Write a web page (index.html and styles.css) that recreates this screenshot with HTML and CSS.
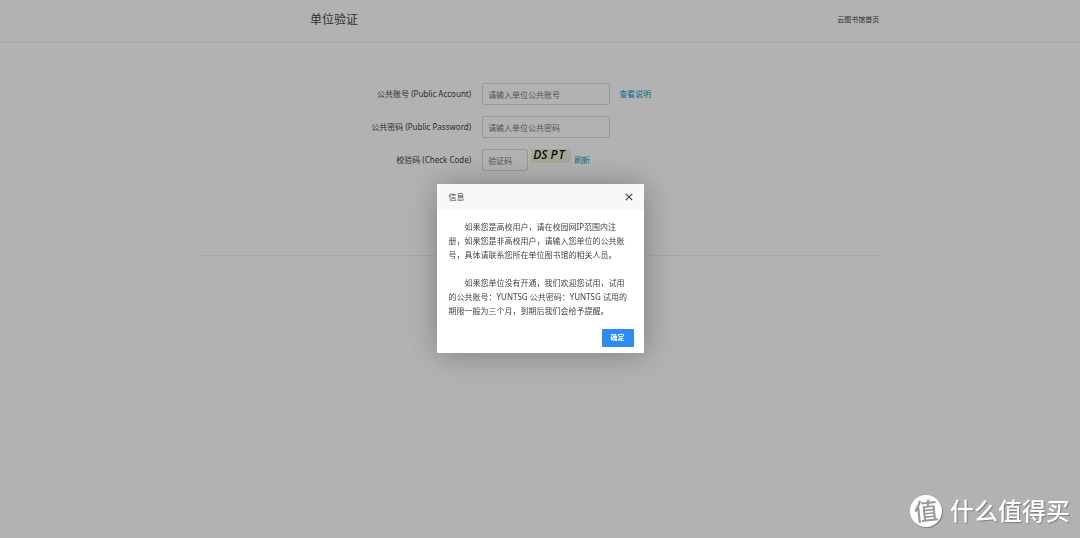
FILE: index.html
```html
<!DOCTYPE html>
<html lang="zh-CN">
<head>
<meta charset="utf-8">
<title>单位验证</title>
<link rel="stylesheet" href="styles.css">
</head>
<body>
<header class="header">
  <div class="container header-inner">
    <h1 class="title">单位验证</h1>
    <a class="home" href="#">云图书馆首页</a>
  </div>
</header>
<main class="container main">
  <form class="form">
    <div class="row">
      <label class="label" for="account">公共账号 (Public Account)</label>
      <div class="field">
        <input class="input" id="account" type="text" placeholder="请输入单位公共账号">
        <a class="link link-help" href="#">查看说明</a>
      </div>
    </div>
    <div class="row">
      <label class="label" for="password">公共密码 (Public Password)</label>
      <div class="field">
        <input class="input" id="password" type="password" placeholder="请输入单位公共密码">
      </div>
    </div>
    <div class="row">
      <label class="label" for="code">校验码 (Check Code)</label>
      <div class="field">
        <input class="input input-code" id="code" type="text" placeholder="验证码">
        <span class="captcha"><span>D</span><span>S</span><span class="captcha-gap">P</span><span class="captcha-tail">T</span></span>
        <a class="link link-refresh" href="#">刷新</a>
      </div>
    </div>
  </form>
</main>
<div class="overlay">
  <section class="dialog" role="dialog" aria-labelledby="dialog-title">
    <div class="dialog-head">
      <h2 class="dialog-title" id="dialog-title">信息</h2>
      <button class="close" type="button" aria-label="关闭">
        <svg width="8" height="8" viewBox="0 0 8 8"><path d="M.8 .8L7.2 7.2M7.2 .8L.8 7.2" fill="none" stroke="#3d4048" stroke-width="1.2"/></svg>
      </button>
    </div>
    <div class="dialog-body">
      <p>如果您是高校用户，请在校园网IP范围内注册，如果您是非高校用户，请输入您单位的公共账号，具体请联系您所在单位图书馆的相关人员。</p>
      <p>如果您单位没有开通，我们欢迎您试用，试用的公共账号：YUNTSG 公共密码：YUNTSG 试用的期限一般为三个月，到期后我们会给予提醒。</p>
    </div>
    <div class="dialog-foot">
      <button class="confirm" type="button">确定</button>
    </div>
  </section>
</div>
<div class="watermark">
  <span class="mark"><span class="mark-char">值</span></span>
  <span>什么值得买</span>
</div>
</body>
</html>
```

FILE: styles.css
```css
* {
  box-sizing: border-box;
}

body {
  margin: 0;
  background: #fff;
  color: #444;
  font-family: "Noto Sans", "Noto Sans CJK SC", sans-serif;
  font-size: 8px;
  line-height: 14px;
}

h1, h2, p {
  margin: 0;
  font-weight: 400;
}

a {
  text-decoration: none;
}

.container {
  width: 63.4%;
  min-width: 480px;
  margin: 0 auto;
}

.header {
  padding: 10px 0 12px;
  border-bottom: 1px solid #f0f0f0;
}

.header-inner {
  display: flex;
  align-items: center;
  justify-content: space-between;
  padding: 0 3px 0 10.4%;
}

.title {
  font-size: 12px;
  line-height: 20px;
}

.home {
  color: #444;
  font-size: 7px;
}

.main {
  padding: 40px 0 84px;
  border-bottom: 1px solid #f0f0f0;
}

.form {
  display: flex;
  flex-direction: column;
  gap: 11px;
}

.row {
  display: grid;
  grid-template-columns: 41fr 60fr;
  column-gap: 11px;
  align-items: center;
}

.label {
  text-align: right;
}

.field {
  display: flex;
  align-items: center;
}

.input {
  width: 128px;
  height: 22px;
  padding: 0 5px;
  border: 1px solid #d8d8d8;
  border-radius: 2px;
  background: #fff;
  color: #444;
  font: inherit;
}

.input::placeholder {
  color: #777;
}

.input-code {
  width: 46px;
}

.link {
  color: #0c9ccb;
}

.link-help {
  margin-left: 9px;
}

.link-refresh {
  margin-left: 3px;
}

.captcha {
  display: flex;
  align-self: flex-start;
  width: 40px;
  height: 14px;
  margin-left: 3px;
  padding-left: 2px;
  background: #f0f0d8;
  color: #111;
  font-family: "Open Sans", sans-serif;
  font-size: 12px;
  font-style: italic;
  font-weight: 600;
  line-height: 12px;
}

.captcha-gap {
  margin-left: 3px;
}

.captcha-tail {
  margin-left: 1px;
}

.overlay {
  position: fixed;
  inset: 0;
  display: flex;
  align-items: center;
  justify-content: center;
  padding-bottom: 1px;
  background: rgba(0, 0, 0, 0.3);
}

.dialog {
  width: 207px;
  border-radius: 1px;
  background: #fff;
  box-shadow: 1px 1px 32px rgba(0, 0, 0, 0.3);
}

.dialog-head {
  display: flex;
  align-items: center;
  justify-content: space-between;
  height: 26px;
  padding: 0 11px 0 12px;
  background: #f8f8f8;
}

.dialog-title {
  font-size: 8px;
}

.close {
  display: flex;
  padding: 0;
  border: 0;
  background: none;
}

.dialog-body {
  display: flex;
  flex-direction: column;
  gap: 14px;
  padding: 10px 12px 11px;
}

.dialog-body p {
  text-indent: 2em;
}

.dialog-foot {
  display: flex;
  justify-content: flex-end;
  padding: 0 10px 6px;
}

.confirm {
  width: 32px;
  height: 18px;
  padding: 0;
  border: 0;
  border-radius: 1px;
  background: #2d8cf0;
  color: #fff;
  font: inherit;
  font-size: 7px;
  font-weight: 700;
}

.watermark {
  position: fixed;
  right: 10px;
  bottom: 10px;
  display: flex;
  align-items: center;
  gap: 8px;
  color: #fff;
  font-size: 24px;
  font-weight: 500;
  line-height: 34px;
  text-shadow: 1px 1px 1px rgba(0, 0, 0, 0.3);
}

.mark {
  display: flex;
  align-items: center;
  justify-content: center;
  width: 32px;
  height: 32px;
  border-radius: 50%;
  background: #fff;
  box-shadow: 1px 1px 1px rgba(0, 0, 0, 0.3);
  color: #999;
  text-shadow: none;
}

.mark-char {
  transform: rotate(-6deg);
}
```
